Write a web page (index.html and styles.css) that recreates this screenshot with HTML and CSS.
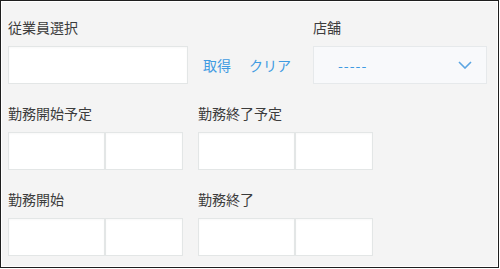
FILE: index.html
```html
<!DOCTYPE html>
<html lang="ja">

<head>
  <meta charset="UTF-8">
  <meta name="viewport" content="width=device-width, initial-scale=1.0">
  <title>勤務登録</title>
  <link rel="stylesheet" href="styles.css">
</head>

<body>
  <div class="panel">
    <div class="row">
      <div class="field">
        <label class="field-label" for="staff">従業員選択</label>
        <input class="box box-staff" id="staff" type="text">
      </div>
      <div class="actions">
        <a class="action" href="#">取得</a>
        <a class="action" href="#">クリア</a>
      </div>
      <div class="field">
        <label class="field-label" for="shop">店舗</label>
        <div class="select" id="shop">
          <span class="select-value">-----</span>
          <svg class="chevron" width="14" height="8" viewBox="0 0 14 8">
            <path d="M1 1 L7 7 L13 1" fill="none" stroke="#5ba5e2" stroke-width="1.6" />
          </svg>
        </div>
      </div>
    </div>

    <div class="row">
      <div class="field">
        <span class="field-label">勤務開始予定</span>
        <div class="pair">
          <input class="box box-date" type="text">
          <input class="box box-time" type="text">
        </div>
      </div>
      <div class="field">
        <span class="field-label">勤務終了予定</span>
        <div class="pair">
          <input class="box box-date" type="text">
          <input class="box box-time" type="text">
        </div>
      </div>
    </div>

    <div class="row">
      <div class="field">
        <span class="field-label">勤務開始</span>
        <div class="pair">
          <input class="box box-date" type="text">
          <input class="box box-time" type="text">
        </div>
      </div>
      <div class="field">
        <span class="field-label">勤務終了</span>
        <div class="pair">
          <input class="box box-date" type="text">
          <input class="box box-time" type="text">
        </div>
      </div>
    </div>
  </div>
</body>

</html>
```

FILE: styles.css
```css
body {
  margin: 0;
  font-family: "Noto Sans CJK JP", "Noto Sans", sans-serif;
  font-size: 14px;
  color: #3c3c3c;
}

.panel {
  box-sizing: border-box;
  width: 499px;
  height: 268px;
  border: 1px solid #1e1e1e;
  box-shadow: inset 0 0 0 1px #ffffff;
  background: #f4f4f4;
  padding: 16px 0 0 7px;
  display: flex;
  flex-direction: column;
  gap: 19px;
}

.row {
  display: flex;
  align-items: flex-end;
  gap: 15px;
}

.field {
  display: flex;
  flex-direction: column;
}

.field-label {
  line-height: 20px;
  height: 20px;
  margin-bottom: 9px;
}

.box {
  box-sizing: border-box;
  height: 38px;
  margin: 0;
  border: 1px solid #e3e6e6;
  background: #ffffff;
  box-shadow: inset 0 1px 2px rgba(0, 0, 0, 0.03);
  outline: none;
  font: inherit;
}

.box-staff {
  width: 180px;
}

.pair {
  display: flex;
}

.box-date {
  width: 97px;
}

.box-time {
  width: 78px;
}

.actions {
  display: flex;
  gap: 18px;
  height: 38px;
  align-items: center;
  width: 95px;
}

.action {
  color: #3f9be2;
  text-decoration: none;
}

.select {
  box-sizing: border-box;
  width: 174px;
  height: 38px;
  border: 1px solid #e6e9eb;
  background: #f8f9fb;
  display: flex;
  align-items: center;
  justify-content: space-between;
  padding: 0 14px 0 24px;
}

.select-value {
  color: #3f9be2;
  letter-spacing: 1px;
}

.chevron {
  display: block;
}
```
